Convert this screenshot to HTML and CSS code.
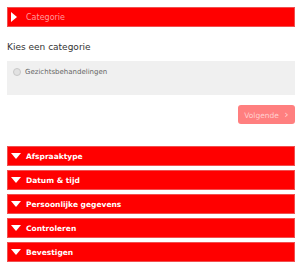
FILE: index.html
```html
<!DOCTYPE html>
<html lang="nl">
<head>
    <meta charset="UTF-8">
    <meta name="viewport" content="width=device-width, initial-scale=1.0">
    <title>Afspraak maken</title>
    <link rel="stylesheet" href="styles.css">
</head>
<body>
    <div class="wizard">
        <div class="step step-open">
            <div class="step-head">
                <span class="arrow-right"></span>
                <span class="step-title">Categorie</span>
            </div>
            <div class="step-body">
                <p class="question">Kies een categorie</p>
                <div class="options">
                    <label class="option">
                        <span class="radio"></span>
                        Gezichtsbehandelingen
                    </label>
                </div>
                <div class="buttons">
                    <button class="next" disabled>Volgende <span class="chev">&rsaquo;</span></button>
                </div>
            </div>
        </div>

        <div class="step">
            <div class="step-head"><span class="arrow-down"></span><span class="step-title">Afspraaktype</span></div>
        </div>
        <div class="step">
            <div class="step-head"><span class="arrow-down"></span><span class="step-title">Datum &amp; tijd</span></div>
        </div>
        <div class="step">
            <div class="step-head"><span class="arrow-down"></span><span class="step-title">Persoonlijke gegevens</span></div>
        </div>
        <div class="step">
            <div class="step-head"><span class="arrow-down"></span><span class="step-title">Controleren</span></div>
        </div>
        <div class="step">
            <div class="step-head"><span class="arrow-down"></span><span class="step-title">Bevestigen</span></div>
        </div>
    </div>
</body>
</html>
```

FILE: styles.css
```css
body {
    font-family: "DejaVu Sans", Verdana, sans-serif;
    background-color: #fff;
    margin: 0;
    padding: 7px 5px 0 7px;
}
.wizard {
    width: 288px;
}
.step {
    margin-bottom: 4px;
}
.step-head {
    background-color: #ff0000;
    border: 1px solid #f05050;
    height: 18px;
    display: flex;
    align-items: center;
    color: #fff;
    font-size: 7.5px;
    font-weight: bold;
}
.step-open .step-head {
    font-size: 8px;
    font-weight: normal;
}
.step-open .step-title {
    color: #ff9a9a;
    margin-left: 9px;
}
.step-title {
    margin-left: 5px;
}
.arrow-right {
    width: 0;
    height: 0;
    margin-left: 3px;
    border-top: 5px solid transparent;
    border-bottom: 5px solid transparent;
    border-left: 6px solid #fff;
}
.arrow-down {
    width: 0;
    height: 0;
    margin-left: 3px;
    border-left: 5.5px solid transparent;
    border-right: 5.5px solid transparent;
    border-top: 6px solid #fff;
}
.question {
    font-size: 9px;
    color: #333;
    margin: 15px 0 9px 0;
}
.options {
    background-color: #f0f0f0;
    height: 34px;
    padding: 7px 0 0 6px;
    box-sizing: border-box;
}
.option {
    display: flex;
    align-items: center;
    font-size: 7px;
    color: #666;
}
.radio {
    width: 6px;
    height: 6px;
    border-radius: 50%;
    background: #e2e2e2;
    border: 1px solid #c8c8c8;
    margin-right: 4px;
}
.buttons {
    text-align: right;
    margin: 8px 0 22px 0;
}
.next {
    background-color: #ff7f7f;
    color: #ffd0d0;
    border: none;
    border-radius: 3px;
    width: 57px;
    height: 19px;
    font-family: "DejaVu Sans", Verdana, sans-serif;
    font-size: 7.5px;
    padding: 0;
}
.chev {
    font-size: 11px;
    margin-left: 3px;
    line-height: 1;
}
```
